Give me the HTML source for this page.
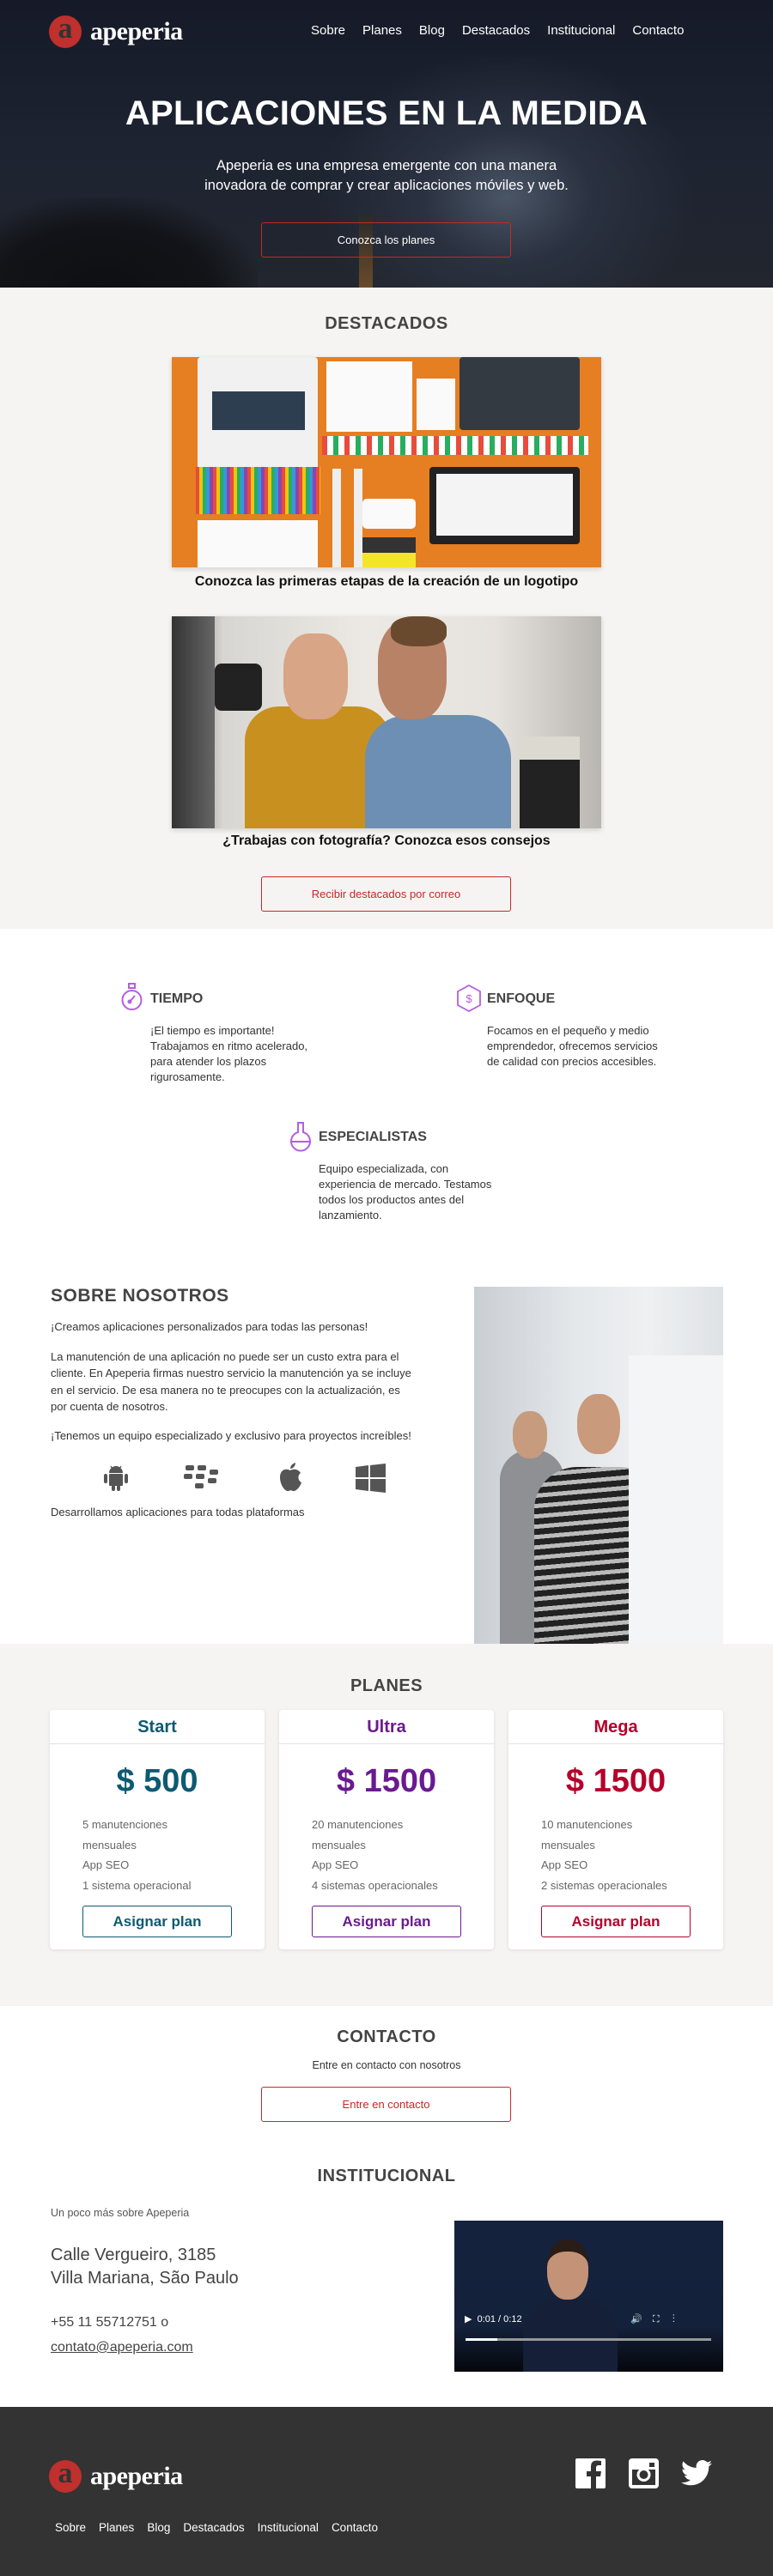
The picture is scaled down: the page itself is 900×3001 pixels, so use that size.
<!DOCTYPE html>
<html><head><meta charset="utf-8">
<style>
*{margin:0;padding:0;box-sizing:border-box}
body{width:900px;height:3001px;position:relative;font-family:"Liberation Sans",sans-serif;color:#333;background:#fff;overflow:hidden}
.a{position:absolute}
.c{text-align:center;left:0;width:900px}
.h2{font-weight:bold;color:#444;font-size:20px;letter-spacing:0.5px}
.btn{position:absolute;border:1px solid #c62828;border-radius:3px;text-align:center;font-size:13px}
.logo{display:flex;align-items:center}
.logo .ci{width:38px;height:38px;border-radius:50%;background:#c0302d;color:#333;font:bold 34px "Liberation Serif",serif;text-align:center;line-height:32px}
.logo .t{color:#fff;font:bold 30px "Liberation Serif",serif;margin-left:10px;letter-spacing:-0.5px}
.nav span{color:#fff;font-size:15px;margin-left:20px}
.feat h3{font-size:16px;color:#444;font-weight:bold}
.feat p{font-size:13px;line-height:18px;color:#333}
.card{position:absolute;top:1992px;width:250px;height:279px;background:#fff;border-radius:4px;box-shadow:0 1px 4px rgba(0,0,0,.1)}
.card .hd{height:40px;border-bottom:1px solid #e4e0ee;text-align:center;font-size:20px;font-weight:bold;line-height:40px}
.card .pr{text-align:center;font-size:38px;font-weight:bold;margin-top:22px;height:50px}
.card ul{list-style:none;margin:10px 0 0 38px;font-size:13px;color:#666;line-height:23.5px}
.card .b{position:absolute;left:38px;top:228px;width:174px;height:37px;border:1px solid;border-radius:3px;text-align:center;line-height:35px;font-size:17px;font-weight:bold}
</style></head><body>

<!-- HERO -->
<div class="a" style="left:0;top:0;width:900px;height:335px;background:radial-gradient(ellipse 220px 170px at 590px 230px,#4a5566 0%,#2a3140 45%,rgba(20,24,36,0) 100%),linear-gradient(180deg,#161a28 0%,#1d2331 50%,#22262e 100%);overflow:hidden">
  <div class="a" style="left:0;top:230px;width:300px;height:110px;background:radial-gradient(ellipse at 40% 100%,#0e0f12 0%,rgba(14,15,18,0.8) 50%,rgba(0,0,0,0) 75%)"></div>
  <div class="a" style="left:418px;top:250px;width:16px;height:85px;background:linear-gradient(#2a2a2a,#6a4a2a)"></div>
</div>
<div class="a logo" style="left:57px;top:18px"><div class="ci">a</div><div class="t">apeperia</div></div>
<div class="a nav" style="left:342px;top:27px"><span>Sobre</span><span>Planes</span><span>Blog</span><span>Destacados</span><span>Institucional</span><span>Contacto</span></div>
<div class="a c" style="top:110px;color:#fff;font-size:40px;font-weight:bold;letter-spacing:0.3px">APLICACIONES EN LA MEDIDA</div>
<div class="a c" style="top:182px;color:#fff;font-size:16.5px;line-height:23px">Apeperia es una empresa emergente con una manera<br>inovadora de comprar y crear aplicaciones móviles y web.</div>
<div class="btn" style="left:304px;top:259px;width:291px;height:41px;line-height:39px;color:#fff">Conozca los planes</div>

<!-- DESTACADOS -->
<div class="a" style="left:0;top:335px;width:900px;height:747px;background:#f5f4f2"></div>
<div class="a c h2" style="top:366px">DESTACADOS</div>
<div class="a" style="left:200px;top:416px;width:500px;height:245px;background:#e67e22;box-shadow:0 2px 6px rgba(0,0,0,.15);overflow:hidden">
  <div class="a" style="left:30px;top:0;width:140px;height:140px;background:#f1f1f1;border-radius:4px"></div>
  <div class="a" style="left:47px;top:40px;width:108px;height:45px;background:#2c3e50"></div>
  <div class="a" style="left:180px;top:5px;width:100px;height:82px;background:#fafafa"></div>
  <div class="a" style="left:285px;top:25px;width:45px;height:60px;background:#fafafa"></div>
  <div class="a" style="left:335px;top:0;width:140px;height:85px;background:#333a42;border-radius:4px"></div>
  <div class="a" style="left:175px;top:92px;width:310px;height:22px;background:repeating-linear-gradient(90deg,#e74c3c 0 6px,#fff 6px 13px,#27ae60 13px 19px,#fff 19px 26px)"></div>
  <div class="a" style="left:28px;top:128px;width:145px;height:55px;background:repeating-linear-gradient(90deg,#e74c3c 0 4px,#f1c40f 4px 8px,#27ae60 8px 12px,#3498db 12px 16px,#8e44ad 16px 20px)"></div>
  <div class="a" style="left:30px;top:190px;width:140px;height:60px;background:#fafafa"></div>
  <div class="a" style="left:187px;top:130px;width:10px;height:120px;background:#eee"></div>
  <div class="a" style="left:212px;top:130px;width:10px;height:120px;background:#eee"></div>
  <div class="a" style="left:222px;top:165px;width:62px;height:35px;background:#fafafa;border-radius:5px"></div>
  <div class="a" style="left:222px;top:210px;width:62px;height:40px;background:#f5e52a;border-top:18px solid #333"></div>
  <div class="a" style="left:300px;top:128px;width:175px;height:90px;background:#222;border-radius:4px"></div>
  <div class="a" style="left:308px;top:136px;width:159px;height:72px;background:#f4f4f4"></div>
</div>
<div class="a c" style="top:669px;font-size:16px;font-weight:bold;color:#111">Conozca las primeras etapas de la creación de un logotipo</div>
<div class="a" style="left:200px;top:718px;width:500px;height:247px;background:linear-gradient(90deg,#6e6e6e 0%,#d8d6d2 12%,#ece9e4 45%,#e6e3de 75%,#b9b6b1 100%);box-shadow:0 2px 6px rgba(0,0,0,.15);overflow:hidden">
  <div class="a" style="left:0;top:0;width:50px;height:247px;background:linear-gradient(90deg,#333,#666)"></div>
  <div class="a" style="left:85px;top:105px;width:170px;height:142px;background:#c8901f;border-radius:40px 40px 0 0"></div>
  <div class="a" style="left:130px;top:20px;width:75px;height:100px;background:#d8a586;border-radius:40%"></div>
  <div class="a" style="left:225px;top:115px;width:170px;height:132px;background:#6d8fb3;border-radius:50px 50px 0 0"></div>
  <div class="a" style="left:240px;top:5px;width:80px;height:115px;background:#b88266;border-radius:40%"></div>
  <div class="a" style="left:255px;top:0;width:65px;height:35px;background:#6a4a2e;border-radius:40%"></div>
  <div class="a" style="left:50px;top:55px;width:55px;height:55px;background:#222;border-radius:8px"></div>
  <div class="a" style="left:405px;top:140px;width:70px;height:107px;background:linear-gradient(#dcdad0 0 25%,#222 25%)"></div>
</div>
<div class="a c" style="top:971px;font-size:16px;font-weight:bold;color:#111">¿Trabajas con fotografía? Conozca esos consejos</div>
<div class="btn" style="left:304px;top:1021px;width:291px;height:41px;line-height:39px;color:#c62828">Recibir destacados por correo</div>

<!-- FEATURES -->
<svg class="a" style="left:141px;top:1145px" width="25" height="34" viewBox="0 0 25 34" fill="none" stroke="#b45ee0" stroke-width="2"><rect x="9" y="1" width="7" height="5"/><circle cx="12.5" cy="20" r="11"/><path d="M10 22 L16 15"/><circle cx="10" cy="22" r="1.5"/></svg>
<div class="a feat" style="left:175px;top:1155px"><h3>TIEMPO</h3></div>
<div class="a feat" style="left:175px;top:1192px;width:220px"><p>¡El tiempo es importante!<br>Trabajamos en ritmo acelerado,<br>para atender los plazos<br>rigurosamente.</p></div>
<svg class="a" style="left:532px;top:1147px" width="28" height="32" viewBox="0 0 28 32" fill="none" stroke="#b45ee0" stroke-width="1.8"><path d="M14 1 L27 8 L27 24 L14 31 L1 24 L1 8 Z"/><text x="14" y="21" font-size="13" fill="#b45ee0" stroke="none" text-anchor="middle" font-family="Liberation Sans">$</text></svg>
<div class="a feat" style="left:567px;top:1155px"><h3>ENFOQUE</h3></div>
<div class="a feat" style="left:567px;top:1192px;width:230px"><p>Focamos en el pequeño y medio<br>emprendedor, ofrecemos servicios<br>de calidad con precios accesibles.</p></div>
<svg class="a" style="left:337px;top:1306px" width="26" height="36" viewBox="0 0 26 36" fill="none" stroke="#b45ee0" stroke-width="2"><path d="M9 2 H17 M10 2 V13 A11 11 0 1 0 16 13 V2"/><path d="M2 24 H24"/></svg>
<div class="a feat" style="left:371px;top:1316px"><h3>ESPECIALISTAS</h3></div>
<div class="a feat" style="left:371px;top:1353px;width:230px"><p>Equipo especializada, con<br>experiencia de mercado. Testamos<br>todos los productos antes del<br>lanzamiento.</p></div>

<!-- SOBRE -->
<div class="a h2" style="left:59px;top:1498px;font-size:21px">SOBRE NOSOTROS</div>
<div class="a" style="left:59px;top:1536px;width:460px;font-size:13px;line-height:19.5px;color:#333">
<p>¡Creamos aplicaciones personalizados para todas las personas!</p>
<p style="margin-top:15px">La manutención de una aplicación no puede ser un custo extra para el<br>cliente. En Apeperia firmas nuestro servicio la manutención ya se incluye<br>en el servicio. De esa manera no te preocupes con la actualización, es<br>por cuenta de nosotros.</p>
<p style="margin-top:14px">¡Tenemos un equipo especializado y exclusivo para proyectos increíbles!</p>
</div>
<!-- platform icons -->
<svg class="a" style="left:120px;top:1704px" width="30" height="34" viewBox="0 0 30 34" fill="#555"><path d="M7 12 A8 8 0 0 1 23 12 Z"/><rect x="7" y="13" width="16" height="14" rx="1"/><rect x="1" y="13" width="4" height="11" rx="2"/><rect x="25" y="13" width="4" height="11" rx="2"/><rect x="10" y="26" width="4" height="7" rx="2"/><rect x="16" y="26" width="4" height="7" rx="2"/><path d="M9 4 L11 7 M21 4 L19 7" stroke="#555" stroke-width="1.3"/></svg>
<svg class="a" style="left:212px;top:1706px" width="50" height="32" viewBox="0 0 50 32" fill="#555"><rect x="4" y="1" width="10" height="6" rx="2"/><rect x="18" y="1" width="10" height="6" rx="2"/><rect x="2" y="11" width="10" height="6" rx="2"/><rect x="16" y="11" width="10" height="6" rx="2"/><rect x="32" y="6" width="10" height="6" rx="2"/><rect x="30" y="16" width="10" height="6" rx="2"/><rect x="15" y="22" width="10" height="6" rx="2"/></svg>
<svg class="a" style="left:323px;top:1703px" width="30" height="36" viewBox="0 0 30 36" fill="#555"><path d="M15 10 C10 7 3 9 3 18 C3 27 9 35 13 34 C15 33 16 33 18 34 C22 35 27 28 28 24 C24 22 23 16 27 13 C24 8 18 8 15 10 Z"/><path d="M15 8 C15 4 18 2 21 1 C21 5 18 8 15 8 Z"/></svg>
<svg class="a" style="left:414px;top:1705px" width="35" height="34" viewBox="0 0 35 34" fill="#555"><path d="M0 4 L15 2 L15 16 L0 16 Z M17 2 L35 0 L35 16 L17 16 Z M0 18 L15 18 L15 32 L0 30 Z M17 18 L35 18 L35 34 L17 32 Z"/></svg>
<div class="a" style="left:59px;top:1754px;font-size:13px;color:#333">Desarrollamos aplicaciones para todas plataformas</div>
<div class="a" style="left:552px;top:1499px;width:290px;height:416px;background:linear-gradient(90deg,#c9ced3 0%,#e4e7ea 40%,#eef0f2 70%,#dfe2e5 100%);overflow:hidden">
  <div class="a" style="left:30px;top:190px;width:75px;height:226px;background:#8e9094;border-radius:35px 35px 0 0"></div>
  <div class="a" style="left:45px;top:145px;width:40px;height:55px;background:#c79b7e;border-radius:45%"></div>
  <div class="a" style="left:70px;top:210px;width:150px;height:206px;background:repeating-linear-gradient(175deg,#222 0 7px,#bbb 7px 12px);border-radius:50px 50px 0 0"></div>
  <div class="a" style="left:120px;top:125px;width:50px;height:70px;background:#c99a7c;border-radius:45%"></div>
  <div class="a" style="left:180px;top:80px;width:110px;height:336px;background:#f4f5f6"></div>
</div>

<!-- PLANES -->
<div class="a" style="left:0;top:1915px;width:900px;height:422px;background:#f5f4f2"></div>
<div class="a c h2" style="top:1953px">PLANES</div>
<div class="card" style="left:58px;color:#0e5a72"><div class="hd">Start</div><div class="pr">$ 500</div><ul><li>5 manutenciones</li><li>mensuales</li><li>App SEO</li><li>1 sistema operacional</li></ul><div class="b" style="border-color:#0e5a72">Asignar plan</div></div>
<div class="card" style="left:325px;color:#6a1a8f"><div class="hd">Ultra</div><div class="pr">$ 1500</div><ul><li>20 manutenciones</li><li>mensuales</li><li>App SEO</li><li>4 sistemas operacionales</li></ul><div class="b" style="border-color:#6a1a8f">Asignar plan</div></div>
<div class="card" style="left:592px;color:#b5002a"><div class="hd">Mega</div><div class="pr">$ 1500</div><ul><li>10 manutenciones</li><li>mensuales</li><li>App SEO</li><li>2 sistemas operacionales</li></ul><div class="b" style="border-color:#b5002a">Asignar plan</div></div>

<!-- CONTACTO -->
<div class="a c h2" style="top:2362px">CONTACTO</div>
<div class="a c" style="top:2399px;font-size:12.5px">Entre en contacto con nosotros</div>
<div class="btn" style="left:304px;top:2431px;width:291px;height:41px;line-height:39px;color:#c62828">Entre en contacto</div>

<!-- INSTITUCIONAL -->
<div class="a c h2" style="top:2524px">INSTITUCIONAL</div>
<div class="a" style="left:59px;top:2571px;font-size:12.5px;color:#555">Un poco más sobre Apeperia</div>
<div class="a" style="left:59px;top:2614px;font-size:20px;line-height:27px;color:#444">Calle Vergueiro, 3185<br>Villa Mariana, São Paulo</div>
<div class="a" style="left:59px;top:2697px;font-size:16px;color:#444">+55 11 55712751 o</div>
<div class="a" style="left:59px;top:2726px;font-size:16px;color:#444;text-decoration:underline">contato@apeperia.com</div>
<div class="a" style="left:529px;top:2587px;width:313px;height:176px;background:linear-gradient(180deg,#15223e 0%,#14213a 70%,#05070c 100%);overflow:hidden">
  <div class="a" style="left:80px;top:90px;width:110px;height:90px;background:#152038;border-radius:45px 45px 0 0"></div>
  <div class="a" style="left:108px;top:22px;width:48px;height:70px;background:#c49277;border-radius:45%;border-top:14px solid #2a1c16"></div>
  <div class="a" style="left:12px;top:108px;font-size:11px;color:#fff">▶&nbsp;&nbsp;0:01 / 0:12</div>
  <div class="a" style="left:205px;top:108px;font-size:11px;color:#fff">🔊&nbsp;&nbsp;&nbsp;&nbsp;⛶&nbsp;&nbsp;&nbsp;&nbsp;&nbsp;⋮</div>
  <div class="a" style="left:13px;top:137px;width:286px;height:3px;background:#999"></div>
  <div class="a" style="left:13px;top:137px;width:37px;height:3px;background:#fff"></div>
</div>

<!-- FOOTER -->
<div class="a" style="left:0;top:2804px;width:900px;height:197px;background:#333"></div>
<div class="a logo" style="left:57px;top:2866px"><div class="ci">a</div><div class="t">apeperia</div></div>
<svg class="a" style="left:670px;top:2864px" width="35" height="35" viewBox="0 0 35 35"><rect width="35" height="35" rx="2" fill="#fff"/><path d="M24 35 V21 H29 L30 15 H24 V11 C24 9 25 8 27 8 H30 V3 C29 3 27 2.5 25 2.5 C20 2.5 18 5 18 10 V15 H13 V21 H18 V35 Z" fill="#333"/></svg>
<svg class="a" style="left:732px;top:2864px" width="35" height="35" viewBox="0 0 35 35"><rect width="35" height="35" rx="4" fill="#fff"/><rect x="4" y="13" width="27" height="18" fill="#333"/><circle cx="17.5" cy="19" r="8" fill="#fff"/><circle cx="17.5" cy="19" r="5" fill="#333"/><rect x="24" y="5" width="6" height="5" fill="#333"/></svg>
<svg class="a" style="left:793px;top:2866px" width="36" height="30" viewBox="0 0 24 20"><path fill="#fff" d="M24 2.4c-.9.4-1.8.6-2.8.8 1-.6 1.8-1.6 2.2-2.7-1 .6-2 1-3.1 1.2C19.3.7 18 0 16.6 0c-2.7 0-4.900 2.2-4.9 4.9 0 .4 0 .8.1 1.1C7.7 5.8 4.1 3.9 1.7.9c-.4.7-.7 1.600-.7 2.5 0 1.7.9 3.2 2.2 4.1-.8 0-1.6-.2-2.2-.6v.1c0 2.4 1.7 4.4 3.9 4.8-.4.1-.8.2-1.3.2-.3 0-.6 0-.9-.1.6 2 2.4 3.4 4.6 3.4-1.7 1.3-3.8 2.1-6.1 2.1-.4 0-.8 0-1.200-.1 2.2 1.4 4.8 2.2 7.5 2.2 9.1 0 14-7.5 14-14v-.6c1-.7 1.8-1.6 2.5-2.5z"/></svg>
<div class="a" style="left:64px;top:2937px;color:#fff;font-size:13.5px"><span>Sobre</span><span style="margin-left:15px">Planes</span><span style="margin-left:15px">Blog</span><span style="margin-left:15px">Destacados</span><span style="margin-left:15px">Institucional</span><span style="margin-left:15px">Contacto</span></div>
</body></html>
